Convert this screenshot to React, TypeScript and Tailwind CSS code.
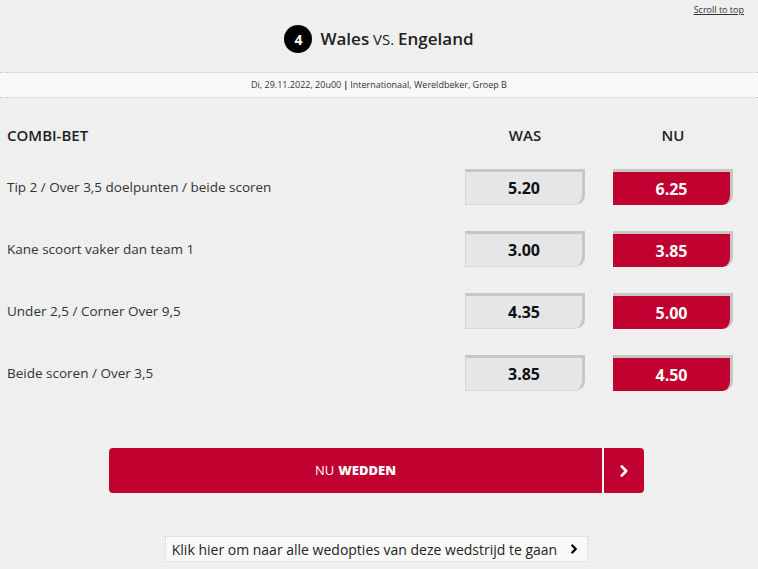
import { ChevronRight } from "lucide-react";

const rows = [
  { label: "Tip 2 / Over 3,5 doelpunten / beide scoren", was: "5.20", nu: "6.25" },
  { label: "Kane scoort vaker dan team 1", was: "3.00", nu: "3.85" },
  { label: "Under 2,5 / Corner Over 9,5", was: "4.35", nu: "5.00" },
  { label: "Beide scoren / Over 3,5", was: "3.85", nu: "4.50" },
];

export default function App() {
  return (
    <div
      className="w-[758px] h-[569px] overflow-hidden bg-[#efefef] text-[#222]"
      style={{ fontFamily: '"Open Sans", "Noto Sans", sans-serif' }}
    >
      {/* header */}
      <div className="flex justify-end pr-[14px] pt-[4px] h-[16px]">
        <a className="text-[9px] leading-[12px] text-[#333] underline">Scroll to top</a>
      </div>
      <div className="flex items-center justify-center gap-[8px] h-[48px] pb-[2px]">
        <div className="w-[28px] h-[28px] rounded-full bg-black text-white flex items-center justify-center text-[14px] font-bold">
          4
        </div>
        <div className="text-[17px] text-[#222]">
          <span className="font-semibold">Wales</span>
          <span className="text-[15px]"> VS. </span>
          <span className="font-semibold">Engeland</span>
        </div>
      </div>
      <div className="mt-[8px] h-[26px] bg-[#f8f8f8] border-y border-dotted border-[#c4c4c4] flex items-center justify-center text-[9px] text-[#333]">
        Di, 29.11.2022, 20u00 <span className="font-bold mx-[2px]">|</span> Internationaal, Wereldbeker, Groep B
      </div>

      {/* combi table */}
      <div className="mt-[27px] flex items-center h-[20px]">
        <div className="flex-1 pl-[7px] text-[15px] font-semibold">COMBI-BET</div>
        <div className="w-[120px] text-center text-[15px] font-semibold">WAS</div>
        <div className="w-[28px]" />
        <div className="w-[120px] text-center text-[15px] font-semibold">NU</div>
        <div className="w-[25px]" />
      </div>

      <div className="mt-[24px] flex flex-col gap-[26px]">
        {rows.map((r) => (
          <div key={r.label} className="flex items-center h-[36px]">
            <div className="flex-1 pl-[7px] text-[13.5px] text-[#333]">{r.label}</div>
            <div className="w-[120px] h-[36px] bg-[#e6e6e6] border-t-[3px] border-r-[3px] border-l border-b border-t-[#c6c6c6] border-r-[#c6c6c6] border-l-[#d6d6d6] border-b-[#d6d6d6] rounded-br-[10px] flex items-center justify-center text-[16px] font-bold text-[#111]">
              {r.was}
            </div>
            <div className="w-[28px]" />
            <div className="w-[120px] h-[36px] bg-[#c0002f] border-t-[3px] border-r-[3px] border-t-[#c6c6c6] border-r-[#c6c6c6] rounded-br-[10px] flex items-center justify-center text-[16px] font-bold text-white">
              {r.nu}
            </div>
            <div className="w-[25px]" />
          </div>
        ))}
      </div>

      {/* bet button */}
      <div className="mt-[57px] flex justify-center pr-[5px]">
        <div className="flex w-[535px] h-[45px] rounded-[4px] overflow-hidden">
          <div className="flex-1 bg-[#c0002f] flex items-center justify-center text-white text-[13px]">
            NU <span className="font-extrabold ml-[4px]">WEDDEN</span>
          </div>
          <div className="w-[2px] bg-[#f4f4f4]" />
          <div className="w-[40px] bg-[#c0002f] flex items-center justify-center">
            <ChevronRight size={18} strokeWidth={3.5} className="text-white" />
          </div>
        </div>
      </div>

      {/* link */}
      <div className="mt-[43px] flex justify-center pr-[5px]">
        <div className="flex items-center gap-[10px] h-[26px] px-[6px] bg-[#fafafa] border border-dotted border-[#cfcfcf] text-[14px] text-[#222]">
          Klik hier om naar alle wedopties van deze wedstrijd te gaan
          <ChevronRight size={14} strokeWidth={4} className="text-black" />
        </div>
      </div>
    </div>
  );
}
